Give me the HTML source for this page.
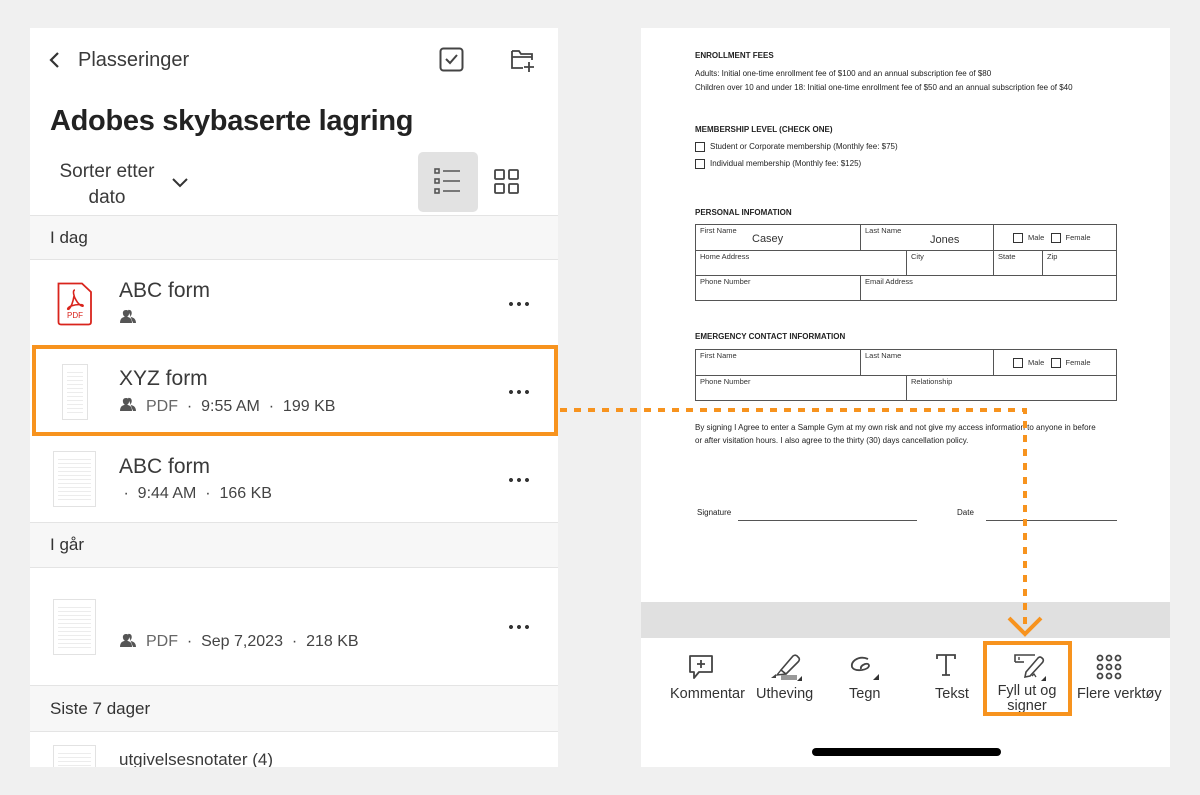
<!DOCTYPE html>
<html><head><meta charset="utf-8"><style>
*{margin:0;padding:0;box-sizing:border-box}
body{width:1200px;height:795px;background:#f0f0f0;position:relative;overflow:hidden;font-family:"Liberation Sans",sans-serif;color:#2c2c2c}
.a{position:absolute}
.lp{left:30px;top:28px;width:528px;height:739px;background:#fff;overflow:hidden}
.rp{left:641px;top:28px;width:529px;height:739px;background:#fff;overflow:hidden}
.sec{position:absolute;left:0;width:528px;background:#f7f7f7;border-top:1px solid #e4e4e4;border-bottom:1px solid #e4e4e4;font-size:17px;color:#333;padding-left:20px}
.fn{position:absolute;left:89px;font-size:21px;color:#3a3a3a}
.meta{position:absolute;left:89px;font-size:16px;color:#444}
.dots{position:absolute;left:477px;width:22px;height:4px;background:radial-gradient(circle,#333 1.8px,transparent 2.2px) 0 0/8px 4px repeat-x}
.d{font-size:8px;color:#222;position:absolute;white-space:nowrap}
.b{font-weight:bold}
.cb{display:inline-block;width:10px;height:10px;border:1px solid #333;vertical-align:middle;margin-right:5px}
.cell{position:absolute;border:1px solid #555;font-size:7.5px;padding:1px 4px;color:#333}
.tl{position:absolute;top:686px;font-size:14.5px;color:#333;text-align:center;white-space:nowrap}
.thumb{position:absolute;border:1px solid #e2e2e2;background:#fff repeating-linear-gradient(#fff 0 3px,#ececec 3px 4px);background-clip:content-box;padding:4px}
</style></head><body>
<div class="a lp">
 <svg class="a" style="left:18px;top:22px" width="14" height="20"><path d="M10 3 L3 10 L10 17" stroke="#333" stroke-width="2.2" fill="none"/></svg>
 <div class="a" style="left:48px;top:21px;font-size:20px;color:#3a3a3a">Plasseringer</div>
 <svg class="a" style="left:409px;top:19px" width="26" height="26"><rect x="1.5" y="1.5" width="22" height="22" rx="3" stroke="#444" stroke-width="2" fill="none"/><path d="M7 12 L11 16 L18 8" stroke="#444" stroke-width="2" fill="none"/></svg>
 <svg class="a" style="left:480px;top:19px" width="26" height="26"><path d="M2 4 H9 L11 7 H22 V13 M2 4 V21 H13" stroke="#444" stroke-width="1.8" fill="none"/><path d="M2 10 H22" stroke="#444" stroke-width="1.8"/><path d="M19 15 V25 M14 20 H24" stroke="#444" stroke-width="1.8"/></svg>
 <div class="a b" style="left:20px;top:77px;font-size:29px;color:#222;letter-spacing:-0.3px">Adobes skybaserte lagring</div>
 <div class="a" style="left:22px;top:131px;width:110px;text-align:center;font-size:19px;line-height:26px;color:#3a3a3a">Sorter etter<br>dato</div>
 <svg class="a" style="left:140px;top:148px" width="20" height="14"><path d="M3 3 L10 10 L17 3" stroke="#333" stroke-width="2" fill="none"/></svg>
 <div class="a" style="left:388px;top:124px;width:60px;height:60px;background:#e2e2e2;border-radius:5px"></div>
 <svg class="a" style="left:404px;top:140px" width="30" height="30"><g stroke="#555" stroke-width="1.6" fill="none"><rect x="1" y="1" width="4" height="4"/><rect x="1" y="11" width="4" height="4"/><rect x="1" y="21" width="4" height="4"/><path d="M9 3H26M9 13H26M9 23H26"/></g></svg>
 <svg class="a" style="left:464px;top:141px" width="26" height="26"><g stroke="#444" stroke-width="1.8" fill="none"><rect x="1" y="1" width="9" height="9" rx="1"/><rect x="15" y="1" width="9" height="9" rx="1"/><rect x="1" y="15" width="9" height="9" rx="1"/><rect x="15" y="15" width="9" height="9" rx="1"/></g></svg>
 <div class="sec" style="top:187px;height:45px;line-height:43px">I dag</div>
 <svg class="a" style="left:27px;top:254px" width="36" height="44"><path d="M1.5 1.5 H25 L34 10 V40 Q34 42.5 31.5 42.5 H4 Q1.5 42.5 1.5 40 Z" stroke="#d9241c" stroke-width="1.8" fill="#fff"/><path d="M18 8 C15 8 17 15 19 18 C21 22 25 25 26 24 C27 22 20 22 14 24 C10 26 10 28 12 27 C14 25 16 20 17 14" stroke="#d9241c" stroke-width="1.6" fill="none"/><text x="18" y="36" font-size="8" text-anchor="middle" fill="#d9241c" font-family="Liberation Sans">PDF</text></svg>
 <div class="fn" style="top:251px">ABC form</div>
 <svg class="a" style="left:89px;top:280px" width="18" height="16"><path d="M1 15 C1 10 4 9 6 9 C3 7 3 2 7 2 C11 2 11 7 8 9 C10 9 13 10 13 15Z M9 2 C13 1 14 6 11 9 C13 9 17 10 17 15 H14" fill="#555"/></svg>
 <div class="dots" style="top:274px"></div>
 <div class="thumb" style="left:32px;top:336px;width:26px;height:56px"></div>
 <div class="fn" style="top:339px">XYZ form</div>
 <div class="meta" style="top:370px"><span style="display:inline-block;width:27px"></span><span style="color:#666">PDF</span> &nbsp;·&nbsp; 9:55 AM &nbsp;·&nbsp; 199 KB</div>
 <svg class="a" style="left:89px;top:368px" width="18" height="16"><path d="M1 15 C1 10 4 9 6 9 C3 7 3 2 7 2 C11 2 11 7 8 9 C10 9 13 10 13 15Z M9 2 C13 1 14 6 11 9 C13 9 17 10 17 15 H14" fill="#555"/></svg>
 <div class="dots" style="top:362px"></div>
 <div class="thumb" style="left:23px;top:423px;width:43px;height:56px"></div>
 <div class="fn" style="top:427px">ABC form</div>
 <div class="meta" style="top:457px">&nbsp;·&nbsp; 9:44 AM &nbsp;·&nbsp; 166 KB</div>
 <div class="dots" style="top:450px"></div>
 <div class="sec" style="top:494px;height:46px;line-height:44px">I går</div>
 <div class="thumb" style="left:23px;top:571px;width:43px;height:56px"></div>
 <svg class="a" style="left:89px;top:604px" width="18" height="16"><path d="M1 15 C1 10 4 9 6 9 C3 7 3 2 7 2 C11 2 11 7 8 9 C10 9 13 10 13 15Z M9 2 C13 1 14 6 11 9 C13 9 17 10 17 15 H14" fill="#555"/></svg>
 <div class="meta" style="top:605px"><span style="display:inline-block;width:27px"></span><span style="color:#666">PDF</span> &nbsp;·&nbsp; Sep 7,2023 &nbsp;·&nbsp; 218 KB</div>
 <div class="dots" style="top:597px"></div>
 <div class="sec" style="top:657px;height:47px;line-height:45px">Siste 7 dager</div>
 <div class="thumb" style="left:23px;top:717px;width:43px;height:30px"></div>
 <div class="fn" style="top:722px;font-size:17px">utgivelsesnotater (4)</div>
</div>
<div class="a" style="left:32px;top:345px;width:526px;height:91px;border:4px solid #f7931e"></div>

<div class="a rp">
 <div class="d b" style="left:54px;top:23px">ENROLLMENT FEES</div>
 <div class="d" style="left:54px;top:41px">Adults: Initial one-time enrollment fee of $100 and an annual subscription fee of $80</div>
 <div class="d" style="left:54px;top:55px">Children over 10 and under 18: Initial one-time enrollment fee of $50 and an annual subscription fee of $40</div>
 <div class="d b" style="left:54px;top:97px">MEMBERSHIP LEVEL (CHECK ONE)</div>
 <div class="d" style="left:54px;top:114px"><span class="cb"></span>Student or Corporate membership (Monthly fee: $75)</div>
 <div class="d" style="left:54px;top:131px"><span class="cb"></span>Individual membership (Monthly fee: $125)</div>
 <div class="d b" style="left:54px;top:180px">PERSONAL INFOMATION</div>
 <div class="cell" style="left:54px;top:196px;width:166px;height:27px">First Name<span class="a" style="left:56px;top:8px;font-size:11px">Casey</span></div>
 <div class="cell" style="left:219px;top:196px;width:134px;height:27px">Last Name<span class="a" style="left:69px;top:9px;font-size:11px">Jones</span></div>
 <div class="cell" style="left:352px;top:196px;width:124px;height:27px;padding-top:8px;padding-left:19px"><span class="cb"></span>Male &nbsp; <span class="cb"></span>Female</div>
 <div class="cell" style="left:54px;top:222px;width:212px;height:26px">Home Address</div>
 <div class="cell" style="left:265px;top:222px;width:88px;height:26px">City</div>
 <div class="cell" style="left:352px;top:222px;width:50px;height:26px">State</div>
 <div class="cell" style="left:401px;top:222px;width:75px;height:26px">Zip</div>
 <div class="cell" style="left:54px;top:247px;width:166px;height:26px">Phone Number</div>
 <div class="cell" style="left:219px;top:247px;width:257px;height:26px">Email Address</div>
 <div class="d b" style="left:54px;top:304px">EMERGENCY CONTACT INFORMATION</div>
 <div class="cell" style="left:54px;top:321px;width:166px;height:27px">First Name</div>
 <div class="cell" style="left:219px;top:321px;width:134px;height:27px">Last Name</div>
 <div class="cell" style="left:352px;top:321px;width:124px;height:27px;padding-top:8px;padding-left:19px"><span class="cb"></span>Male &nbsp; <span class="cb"></span>Female</div>
 <div class="cell" style="left:54px;top:347px;width:212px;height:26px">Phone Number</div>
 <div class="cell" style="left:265px;top:347px;width:211px;height:26px">Relationship</div>
 <div class="d" style="left:54px;top:395px">By signing I Agree to enter a Sample Gym at my own risk and not give my access information to anyone in before</div>
 <div class="d" style="left:54px;top:408px">or after visitation hours. I also agree to the thirty (30) days cancellation policy.</div>
 <div class="d" style="left:56px;top:480px">Signature</div>
 <div class="a" style="left:97px;top:492px;width:179px;height:1px;background:#555"></div>
 <div class="d" style="left:316px;top:480px">Date</div>
 <div class="a" style="left:345px;top:492px;width:131px;height:1px;background:#555"></div>
 <div class="a" style="left:0;top:574px;width:529px;height:36px;background:#e0e0e0"></div>
 <svg class="a" style="left:47px;top:626px" width="26" height="28"><path d="M2 2 H24 V18 H11 L6 24 V18 H2 Z" stroke="#444" stroke-width="1.8" fill="none" stroke-linejoin="round"/><path d="M13 6 V14 M9 10 H17" stroke="#444" stroke-width="1.8"/></svg>
 <svg class="a" style="left:128px;top:624px" width="34" height="30"><path d="M12 18 L24 4 Q27 2 29 5 L30 6 Q31 8 29 10 L17 22 Z" stroke="#444" stroke-width="1.6" fill="none"/><path d="M12 18 L8 23 L17 22" stroke="#444" stroke-width="1.4" fill="none"/><path d="M2 26 L7 22 V26Z" fill="#444"/><rect x="12" y="23" width="16" height="5" fill="#999"/><path d="M28 29 L33 24 V29Z" fill="#333"/></svg>
 <svg class="a" style="left:207px;top:626px" width="34" height="28"><path d="M20 5 Q13 2 7 6 Q3 9 4 13 Q6 17 14 16 Q20 15 21 12 Q21 9 17 10 Q12 12 13 15" stroke="#444" stroke-width="1.8" fill="none"/><path d="M25 26 L31 20 V26Z" fill="#333"/></svg>
 <svg class="a" style="left:294px;top:625px" width="22" height="24"><path d="M2 6 V2 H20 V6 M11 2 V22 M7 22 H15" stroke="#444" stroke-width="1.8" fill="none"/></svg>
 <svg class="a" style="left:371px;top:624px" width="36" height="30"><path d="M3 10 V3 H23" stroke="#444" stroke-width="1.6" fill="none"/><path d="M3 10 H12" stroke="#444" stroke-width="1.6"/><path d="M7 5 V8" stroke="#444" stroke-width="1.4"/><path d="M14 20 L26 6 Q28 4 30 6 L31 7 Q32 9 30 11 L18 24 L13 25 Z" stroke="#444" stroke-width="1.6" fill="none"/><path d="M20 24 L22 22 L24 25" stroke="#444" stroke-width="1.3" fill="none"/><path d="M29 29 L34 24 V29Z" fill="#333"/></svg>
 <svg class="a" style="left:455px;top:626px" width="26" height="26"><g stroke="#444" stroke-width="1.8" fill="none"><circle cx="4" cy="4" r="2.5"/><circle cx="13" cy="4" r="2.5"/><circle cx="22" cy="4" r="2.5"/><circle cx="4" cy="13" r="2.5"/><circle cx="13" cy="13" r="2.5"/><circle cx="22" cy="13" r="2.5"/><circle cx="4" cy="22" r="2.5"/><circle cx="13" cy="22" r="2.5"/><circle cx="22" cy="22" r="2.5"/></g></svg>
 <div class="a" style="left:171px;top:720px;width:189px;height:8px;background:#000;border-radius:4px"></div>
</div>
<div class="tl" style="left:670px">Kommentar</div>
<div class="tl" style="left:756px">Utheving</div>
<div class="tl" style="left:849px">Tegn</div>
<div class="tl" style="left:935px">Tekst</div>
<div class="tl" style="left:988px;width:78px;line-height:15px;top:684px">Fyll ut og<br>signer</div>
<div class="tl" style="left:1077px">Flere verktøy</div>
<div class="a" style="left:983px;top:641px;width:89px;height:75px;border:4px solid #f7931e"></div>
<svg class="a" style="left:0;top:0" width="1200" height="795"><path d="M560 410 H1025 V632" stroke="#f7931e" stroke-width="4" stroke-dasharray="7 7" fill="none"/><path d="M1009 618 L1025 634 L1041 618" stroke="#f7931e" stroke-width="4" fill="none"/></svg>
</body></html>
